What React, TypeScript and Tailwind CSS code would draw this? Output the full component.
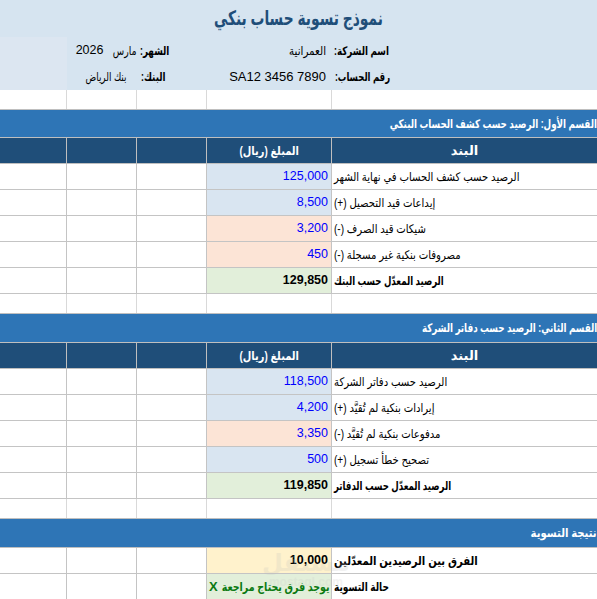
import React from "react";

const widths = ["w-[67px]", "w-[70px]", "w-[70px]", "w-[125px]", "w-[265px]"];

function Cell({
  i,
  className = "",
  children,
  plain = false,
}: {
  i: number;
  className?: string;
  children?: React.ReactNode;
  plain?: boolean;
}) {
  return (
    <div
      className={`${widths[i]} h-full shrink-0 flex items-center overflow-hidden whitespace-nowrap ${
        i < 4 && !plain ? "border-r" : ""
      } ${className}`}
    >
      {children}
    </div>
  );
}

function Ar({ children, className = "" }: { children: React.ReactNode; className?: string }) {
  return (
    <span dir="rtl" className={`inline-block shrink-0 whitespace-nowrap ${className}`}>
      {children}
    </span>
  );
}

function EmptyRow() {
  return (
    <div className="flex h-[20px] border-b border-[#bfbfbf]">
      <Cell i={0} className="border-[#d9d9d9]" />
      <Cell i={1} className="border-[#d9d9d9]" />
      <Cell i={2} className="border-[#d9d9d9]" />
      <Cell i={3} className="border-[#d9d9d9]" />
      <Cell i={4} />
    </div>
  );
}

function SectionRow({ title, h, scale }: { title: string; h: string; scale: string }) {
  return (
    <div
      className={`${h} flex items-center justify-end bg-[#2e75b6] border-b border-[#bfbfbf] overflow-hidden`}
    >
      <Ar className={`text-white font-bold text-[12px] origin-right ${scale}`}>{title}</Ar>
    </div>
  );
}

function HeadRow() {
  return (
    <div className="flex h-[26px] bg-[#1f4e79] border-b border-[#bfbfbf] text-white font-bold">
      <Cell i={0} className="border-[#bfbfbf]" />
      <Cell i={1} className="border-[#bfbfbf]" />
      <Cell i={2} className="border-[#bfbfbf]" />
      <Cell i={3} className="border-[#bfbfbf] justify-center">
        <Ar className="text-[12px] scale-x-[0.82] origin-center">المبلغ (ريال)</Ar>
      </Cell>
      <Cell i={4} className="justify-center">
        <Ar className="text-[13px]">البند</Ar>
      </Cell>
    </div>
  );
}

function DataRow({
  label,
  value,
  bg,
  bold = false,
  valueClass = "text-[#0000ff]",
  labelScale,
}: {
  label: string;
  value: React.ReactNode;
  bg: string;
  bold?: boolean;
  valueClass?: string;
  labelScale?: string;
}) {
  const scale = labelScale ?? (bold ? "scale-x-[0.715]" : "scale-x-[0.84]");
  return (
    <div className="flex h-[26px] border-b border-[#c4c4c4] text-black">
      <Cell i={0} className="border-[#c4c4c4]" />
      <Cell i={1} className="border-[#c4c4c4]" />
      <Cell i={2} className="border-[#c4c4c4]" />
      <Cell i={3} className={`border-[#c4c4c4] ${bg} justify-end pr-[3px]`}>
        <span className={`${bold ? "font-bold" : ""} ${valueClass} text-[12.5px]`}>{value}</span>
      </Cell>
      <Cell i={4} className="justify-start pl-[2px]">
        <Ar className={`origin-left text-[12px] ${bold ? "font-bold" : ""} ${scale}`}>{label}</Ar>
      </Cell>
    </div>
  );
}

export default function App() {
  return (
    <div className="relative w-[597px] h-[599px] overflow-hidden bg-white font-['Liberation_Sans','DejaVu_Sans',sans-serif]">
      {/* Title */}
      <div className="h-[37px] bg-[#d6e4f0] flex items-center justify-center">
        <Ar className="text-[20px] font-bold text-[#1f4e79] scale-x-[0.69] origin-center pb-[2px]">
          نموذج تسوية حساب بنكي
        </Ar>
      </div>

      {/* Info rows */}
      <div className="flex h-[27px] bg-[#d6e4f0] text-black">
        <Cell i={0} plain className="bg-[#dce6f1]" />
        <Cell i={1} plain className="justify-end pr-0">
          <span className="text-[12.5px] mr-[3px]">2026</span>
          <Ar className="text-[12px] scale-x-[0.78] origin-right">مارس</Ar>
        </Cell>
        <Cell i={2} plain className="justify-start pl-[3px]">
          <Ar className="text-[12px] font-bold scale-x-[0.73] origin-left">الشهر:</Ar>
        </Cell>
        <Cell i={3} plain className="justify-end pr-[6px]">
          <Ar className="text-[12px] scale-x-[0.86] origin-right">العمرانية</Ar>
        </Cell>
        <Cell i={4} plain className="justify-start pl-[2px]">
          <Ar className="text-[12px] font-bold scale-x-[0.73] origin-left">اسم الشركة:</Ar>
        </Cell>
      </div>
      <div className="flex h-[26px] bg-[#d6e4f0] text-black">
        <Cell i={0} plain className="bg-[#dce6f1]" />
        <Cell i={1} plain className="justify-end pr-[10px]">
          <Ar className="text-[12px] scale-x-[0.74] origin-right">بنك الرياض</Ar>
        </Cell>
        <Cell i={2} plain className="justify-start pl-[4px]">
          <Ar className="text-[12px] font-bold scale-x-[0.73] origin-left">البنك:</Ar>
        </Cell>
        <Cell i={3} plain className="justify-end pr-[6px]">
          <span className="text-[13px]">SA12 3456 7890</span>
        </Cell>
        <Cell i={4} plain className="justify-start pl-[3px]">
          <Ar className="text-[12px] font-bold scale-x-[0.71] origin-left">رقم الحساب:</Ar>
        </Cell>
      </div>

      <EmptyRow />

      {/* Section 1 */}
      <SectionRow
        h="h-[28px]"
        scale="scale-x-[0.73]"
        title="القسم الأول: الرصيد حسب كشف الحساب البنكي"
      />
      <HeadRow />
      <DataRow label="الرصيد حسب كشف الحساب في نهاية الشهر" value="125,000" bg="bg-[#d9e5f1]" />
      <DataRow label="إيداعات قيد التحصيل (+)" value="8,500" bg="bg-[#d9e5f1]" />
      <DataRow label="شيكات قيد الصرف (-)" value="3,200" bg="bg-[#fce4d6]" />
      <DataRow label="مصروفات بنكية غير مسجلة (-)" value="450" bg="bg-[#fce4d6]" />
      <DataRow
        label="الرصيد المعدّل حسب البنك"
        value="129,850"
        bg="bg-[#e2efda]"
        bold
        valueClass="text-black"
      />

      <EmptyRow />

      {/* Section 2 */}
      <SectionRow
        h="h-[29px]"
        scale="scale-x-[0.73]"
        title="القسم الثاني: الرصيد حسب دفاتر الشركة"
      />
      <HeadRow />
      <DataRow label="الرصيد حسب دفاتر الشركة" value="118,500" bg="bg-[#d9e5f1]" />
      <DataRow label="إيرادات بنكية لم تُقيَّد (+)" value="4,200" bg="bg-[#d9e5f1]" />
      <DataRow label="مدفوعات بنكية لم تُقيَّد (-)" value="3,350" bg="bg-[#fce4d6]" />
      <DataRow label="تصحيح خطأ تسجيل (+)" value="500" bg="bg-[#d9e5f1]" />
      <DataRow
        label="الرصيد المعدّل حسب الدفاتر"
        value="119,850"
        bg="bg-[#e2efda]"
        bold
        valueClass="text-black"
      />

      <EmptyRow />

      {/* Section 3 */}
      <SectionRow h="h-[29px]" scale="scale-x-[0.84]" title="نتيجة التسوية" />
      <DataRow
        label="الفرق بين الرصيدين المعدّلين"
        value="10,000"
        bg="bg-[#fff2cc]"
        bold
        valueClass="text-black"
        labelScale="scale-x-[0.84]"
      />
      <div className="flex h-[26px] border-b border-[#c4c4c4] text-black">
        <Cell i={0} className="border-[#c4c4c4]" />
        <Cell i={1} className="border-[#c4c4c4]" />
        <Cell i={2} className="border-[#c4c4c4]" />
        <Cell i={3} className="border-[#c4c4c4] bg-[#e2efda] pl-[2px] pr-[1px] text-[#0b7a12] font-bold">
          <span className="text-[13px] shrink-0">X</span>
          <div className="flex-1 min-w-0 flex justify-end">
            <Ar className="text-[12px] scale-x-[0.79] origin-right">يوجد فرق يحتاج مراجعة</Ar>
          </div>
        </Cell>
        <Cell i={4} className="justify-start pl-[2px]">
          <Ar className="text-[12px] font-bold scale-x-[0.75] origin-left">حالة التسوية</Ar>
        </Cell>
      </div>

      {/* watermark */}
      <div className="absolute left-[262px] top-[551px] flex flex-col items-center pointer-events-none opacity-20">
        <span dir="rtl" className="text-[24px] leading-[24px] font-bold text-[#bdbdbd]">
          مستقل
        </span>
        <span className="text-[12px] leading-[14px] font-bold text-[#c8c8c8]">mostaql.com</span>
      </div>
    </div>
  );
}
